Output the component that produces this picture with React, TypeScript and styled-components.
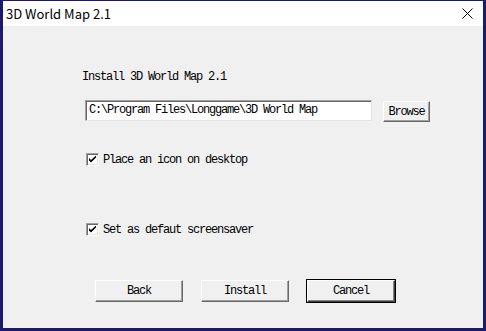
import React from 'react';
import styled, { createGlobalStyle, css } from 'styled-components';

const GlobalStyle = createGlobalStyle`
  html, body {
    margin: 0;
    padding: 0;
    background: #f0f0f0;
  }
`;

const Window = styled.div`
  box-sizing: border-box;
  width: 486px;
  height: 331px;
  display: flex;
  flex-direction: column;
  border: 3px solid #1b1b6e;
  border-top-width: 1px;
  background: #f0f0f0;
`;

const TitleBar = styled.div`
  height: 25px;
  flex-shrink: 0;
  background: #ffffff;
  display: flex;
  align-items: center;
  justify-content: space-between;
  padding: 0 10px 0 3px;
  font-family: "Noto Sans CJK SC", "Noto Sans", sans-serif;
  font-size: 13px;
  color: #000;
`;

const Title = styled.span`
  line-height: 25px;
  margin-top: -1px;
`;

const Body = styled.div`
  flex: 1;
  display: flex;
  flex-direction: column;
  padding: 45px 0 0 79px;
  font-family: "NSimSun", "SimSun", "Liberation Mono", monospace;
  font-size: 12px;
  letter-spacing: -1.2px;
  color: #000;
`;

const Label = styled.div`
  height: 12px;
  line-height: 12px;
  white-space: pre;
`;

const PathRow = styled.div`
  display: flex;
  align-items: flex-start;
  gap: 11px;
  margin-top: 17px;
  padding-left: 3px;
`;

const TextBox = styled.div`
  box-sizing: border-box;
  width: 287px;
  height: 21px;
  background: #fff;
  border: 1px solid;
  border-color: #a0a0a0 #e3e3e3 #e3e3e3 #a0a0a0;
  box-shadow: inset 1px 1px 0 #696969;
  padding: 3px 0 0 3px;
  line-height: 12px;
  white-space: pre;
`;

const ButtonBase = styled.div<{ $default?: boolean }>`
  box-sizing: border-box;
  display: flex;
  align-items: center;
  justify-content: center;
  background: #f0f0f0;
  border: 1px solid;
  border-color: #ffffff #696969 #696969 #ffffff;
  box-shadow: inset -1px -1px 0 #a0a0a0;
  line-height: 12px;
  white-space: pre;

  ${p => p.$default && css`
    outline: 1px solid #000;
    outline-offset: 0;
    border-color: #ffffff #404040 #404040 #ffffff;
    box-shadow: inset -1px -1px 0 #808080;
  `}
`;

const BrowseButton = styled(ButtonBase)`
  width: 47px;
  height: 21px;
  margin-top: 1px;
`;

const CheckRow = styled.div<{ $gap: number }>`
  display: flex;
  align-items: center;
  gap: 4px;
  height: 13px;
  margin-top: ${p => p.$gap}px;
  padding-left: 4px;
`;

const CheckBox = styled.div`
  box-sizing: border-box;
  width: 13px;
  height: 13px;
  background: #fff;
  border: 1px solid;
  border-color: #a0a0a0 #ffffff #ffffff #a0a0a0;
  box-shadow: inset 1px 1px 0 #696969, inset -1px -1px 0 #e3e3e3;
  display: flex;
  align-items: center;
  justify-content: center;
`;

const ButtonRow = styled.div`
  display: flex;
  gap: 18px;
  margin-top: 44px;
  padding-left: 13px;
`;

const DialogButton = styled(ButtonBase)`
  width: 88px;
  height: 22px;
`;

const Check = () => (
  <svg width="7" height="7" viewBox="0 0 7 7">
    <path d="M0 2 L0 4.5 L2 6.5 L7 1.5 L7 -0.5 L2 4 Z" fill="#000" />
  </svg>
);

const CloseIcon = () => (
  <svg width="11" height="11" viewBox="0 0 11 11">
    <path d="M0.5 0.5 L10.5 10.5 M10.5 0.5 L0.5 10.5" stroke="#000" strokeWidth="1" fill="none" />
  </svg>
);

const App = () => (
  <>
    <GlobalStyle />
    <Window>
      <TitleBar>
        <Title>3D World Map 2.1</Title>
        <CloseIcon />
      </TitleBar>
      <Body>
        <Label>Install 3D World Map 2.1</Label>
        <PathRow>
          <TextBox>C:\Program Files\Longgame\3D World Map</TextBox>
          <BrowseButton>Browse</BrowseButton>
        </PathRow>
        <CheckRow $gap={31}>
          <CheckBox><Check /></CheckBox>
          <Label>Place an icon on desktop</Label>
        </CheckRow>
        <CheckRow $gap={57}>
          <CheckBox><Check /></CheckBox>
          <Label>Set as defaut screensaver</Label>
        </CheckRow>
        <ButtonRow>
          <DialogButton>Back</DialogButton>
          <DialogButton>Install</DialogButton>
          <DialogButton $default>Cancel</DialogButton>
        </ButtonRow>
      </Body>
    </Window>
  </>
);

export default App;
